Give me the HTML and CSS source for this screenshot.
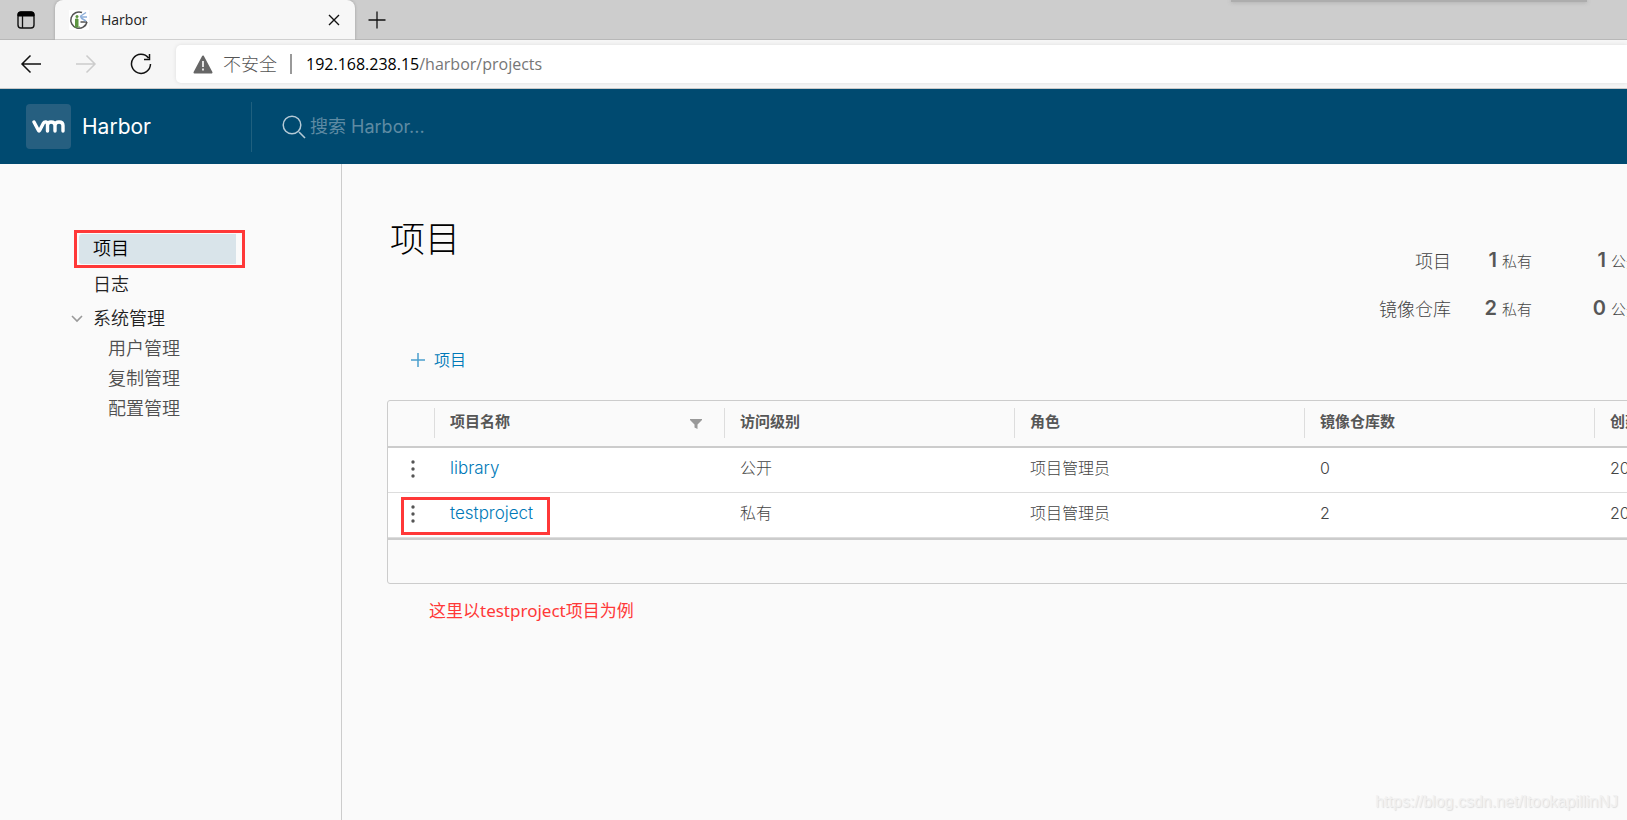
FILE: index.html
```html
<!DOCTYPE html>
<html lang="zh-CN">
<head>
<meta charset="utf-8">
<title>Harbor</title>
<link rel="stylesheet" href="styles.css">
</head>
<body>
<div class="tabstrip">
  <button class="icon-btn strip-menu" aria-label="标签页操作">
    <svg width="18" height="18" viewBox="0 0 18 18"><rect x="1" y="1" width="16" height="16" rx="3" fill="none" stroke="#111" stroke-width="1.4"/><path d="M1 5V3.500Q1 1 3.500 1h11Q17 1 17 3.500V5z" fill="#000" stroke="#000"/><path d="M5.500 5v12" stroke="#111" stroke-width="1.300"/></svg>
  </button>
  <div class="tab">
    <svg width="20" height="20" viewBox="0 0 20 20"><rect width="20" height="20" fill="#fff"/><path d="M13 2.500A8.200 8.200 0 1 0 18 12" fill="none" stroke="#555" stroke-width="1.500"/><path d="M11.500 12H18" stroke="#555" stroke-width="1.300"/><path d="M6.500 16.500V9h2.500v7.500zM5 17h6" fill="#5d9540" stroke="#5d9540"/><circle cx="8" cy="6.500" r="1.500" fill="#5d9540"/><path d="M11 6.500l6-4M11 7h7M12 8l5 3" stroke="#8fb0da" stroke-width="1.500"/></svg>
    <span class="tab-title">Harbor</span>
    <button class="icon-btn" aria-label="关闭标签页"><svg width="12" height="12" viewBox="0 0 12 12"><path d="M1 1l10 10M11 1L1 11" stroke="#111" stroke-width="1.400"/></svg></button>
  </div>
  <button class="icon-btn new-tab" aria-label="新建标签页"><svg width="18" height="18" viewBox="0 0 18 18"><path d="M9 .5v17M.5 9h17" stroke="#111" stroke-width="1.300"/></svg></button>
  <div class="window-edge"></div>
</div>
<div class="toolbar">
  <div class="nav-buttons">
    <button class="icon-btn" aria-label="后退"><svg width="22" height="20" viewBox="0 0 22 20"><path d="M21 10H2M10.500 1.500L2 10l8.500 8.500" fill="none" stroke="#111" stroke-width="1.500"/></svg></button>
    <button class="icon-btn" aria-label="前进"><svg width="22" height="20" viewBox="0 0 22 20"><path d="M1 10h19M11.500 1.500L20 10l-8.500 8.500" fill="none" stroke="#ccc" stroke-width="1.500"/></svg></button>
    <button class="icon-btn" aria-label="刷新"><svg width="22" height="22" viewBox="0 0 22 22"><path d="M18.500 5A9.500 9.500 0 1 0 20.500 11M19.500 1v5.500H14" fill="none" stroke="#111" stroke-width="1.500"/></svg></button>
  </div>
  <div class="address">
    <svg width="20" height="19" viewBox="0 0 20 19"><path d="M10 1.500L18.500 17.500H1.500z" fill="#666" stroke="#666" stroke-width="2" stroke-linejoin="round"/><path d="M10 6v6M10 13.500v2" stroke="#fff" stroke-width="1.600"/></svg>
    <span class="insecure">不安全</span>
    <span class="url">192.168.238.15<span class="url-path">/harbor/projects</span></span>
  </div>
</div>
<header class="app-header">
  <a class="brand" href="#">
    <span class="logo"><svg width="33" height="13" viewBox="0 0 33 13"><path d="M2 2l4.500 8.500Q7 11.500 7.600 10.500L11.500 3Q12.200 1.800 14 2Q15.500 2.200 15.500 4.500V11M15.500 5Q16 2 19 2Q23 2 23 5.500V11M23 5.500Q23 2 27 2Q31 2 31 5.500V11" fill="none" stroke="#fff" stroke-width="3.400" stroke-linecap="round" stroke-linejoin="round"/></svg></span>
    <span class="brand-name">Harbor</span>
  </a>
  <form class="search">
    <svg width="24" height="24" viewBox="0 0 24 24"><circle cx="10" cy="10" r="8.800" fill="none" stroke="#b5cad6" stroke-width="1.500"/><path d="M17 17l6 6" stroke="#b5cad6" stroke-width="1.600"/></svg>
    <input class="search-input" type="text" placeholder="搜索 Harbor..." aria-label="搜索 Harbor">
  </form>
</header>
<div class="body">
  <nav class="sidebar">
    <div class="mark"><a class="nav-link active" href="#">项目</a></div>
    <a class="nav-link" href="#">日志</a>
    <div class="nav-group">
      <svg class="caret" width="12" height="8" viewBox="0 0 12 8"><path d="M1 1l5 5 5-5" fill="none" stroke="#999" stroke-width="1.600"/></svg>
      <a class="nav-link" href="#">系统管理</a>
    </div>
    <a class="sub-link" href="#">用户管理</a>
    <a class="sub-link" href="#">复制管理</a>
    <a class="sub-link" href="#">配置管理</a>
  </nav>
  <main class="content">
    <div class="page-head">
      <h1 class="title">项目</h1>
      <div class="stats">
        <span class="stat-label">项目</span><b class="num">1</b><span class="unit">私有</span><b class="num">1</b><span class="unit">公开</span>
        <span class="stat-label">镜像仓库</span><b class="num">2</b><span class="unit">私有</span><b class="num">0</b><span class="unit">公开</span>
      </div>
    </div>
    <button class="add-btn"><svg width="16" height="16" viewBox="0 0 16 16"><path d="M8 1v14M1 8h14" stroke="#4a9fcd" stroke-width="1.500"/></svg>项目</button>
    <div class="grid">
      <table class="table">
        <colgroup><col class="col-menu"><col><col><col><col><col></colgroup>
        <thead>
          <tr>
            <td></td>
            <th><div class="th">项目名称<button class="icon-btn filter" aria-label="筛选"><svg width="12" height="10" viewBox="0 0 12 10"><path d="M0 0h12v1L7.500 5.500V10L4.500 8.500v-3L0 1z" fill="#999"/></svg></button></div></th>
            <th><div class="th">访问级别</div></th>
            <th><div class="th">角色</div></th>
            <th><div class="th">镜像仓库数</div></th>
            <th><div class="th">创建</div></th>
          </tr>
        </thead>
        <tbody>
          <tr>
            <td class="menu-cell"><button class="icon-btn" aria-label="操作"><svg width="4" height="18" viewBox="0 0 4 18"><circle cx="2" cy="2" r="1.700" fill="#555"/><circle cx="2" cy="9" r="1.700" fill="#555"/><circle cx="2" cy="16" r="1.700" fill="#555"/></svg></button></td>
            <td><a class="link" href="#">library</a></td><td>公开</td><td>项目管理员</td><td>0</td><td>20</td>
          </tr>
          <tr>
            <td class="menu-cell"><button class="icon-btn" aria-label="操作"><svg width="4" height="18" viewBox="0 0 4 18"><circle cx="2" cy="2" r="1.700" fill="#555"/><circle cx="2" cy="9" r="1.700" fill="#555"/><circle cx="2" cy="16" r="1.700" fill="#555"/></svg></button><span class="row-mark"></span></td>
            <td><a class="link" href="#">testproject</a></td><td>私有</td><td>项目管理员</td><td>2</td><td>20</td>
          </tr>
        </tbody>
      </table>
      <div class="grid-foot"></div>
    </div>
    <p class="note">这里以testproject项目为例</p>
  </main>
</div>
<div class="watermark">https://blog.csdn.net/ItookapillinNJ</div>
</body>
</html>
```
FILE: styles.css
```css
* { box-sizing: border-box; }
body {
  margin: 0;
  min-height: 100vh;
  display: flex;
  flex-direction: column;
  overflow: hidden;
  background: #fafafa;
  color: #565656;
  font-family: Inter, "Noto Sans CJK SC", sans-serif;
  font-size: 18px;
}
a { color: inherit; text-decoration: none; }
svg { display: block; flex: none; }
.icon-btn { padding: 0; border: 0; background: none; }

/* browser window */
.tabstrip {
  position: relative;
  display: flex;
  align-items: center;
  height: 40px;
  background: #cdcdcd;
  border-bottom: 1px solid #b8b8b8;
  font-family: "Open Sans", "Noto Sans CJK SC", sans-serif;
}
.strip-menu { margin: 0 20px 0 17px; }
.tab {
  display: flex;
  align-items: center;
  gap: 12px;
  width: 300px;
  height: 40px;
  padding: 0 15px 0 14px;
  background: #f7f7f7;
  border-radius: 8px 8px 0 0;
  box-shadow: 0 0 3px rgba(0, 0, 0, .25);
  clip-path: inset(0 -4px 0 -4px);
  color: #222;
  font-size: 14px;
}
.tab-title { flex: 1; }
.new-tab { margin-left: 13px; }
.window-edge {
  position: absolute;
  top: 0;
  right: 40px;
  width: 356px;
  height: 2px;
  background: #adadad;
  box-shadow: 0 0 4px #999;
}
.toolbar {
  display: flex;
  align-items: center;
  height: 49px;
  background: #f6f6f6;
  border-bottom: 1px solid #c8c8c8;
}
.nav-buttons { display: flex; align-items: center; gap: 33px; width: 176px; padding-left: 20px; }
.address {
  flex: 1;
  display: flex;
  align-items: center;
  height: 38px;
  padding-left: 17px;
  background: #fff;
  border-radius: 5px 0 0 5px;
  box-shadow: 0 0 4px rgba(0, 0, 0, .1);
  font-family: "Open Sans", "Noto Sans CJK SC", sans-serif;
}
.insecure { margin-left: 10px; padding-right: 13px; line-height: 20px; border-right: 2px solid #999; color: #555; font-weight: 300; }
.url { margin-left: 14px; color: #000; font-size: 16px; }
.url-path { color: #767676; }

/* application header */
.app-header { display: flex; align-items: center; height: 75px; background: #004a70; }
.brand {
  display: flex;
  align-items: center;
  gap: 11px;
  width: 252px;
  height: 50px;
  padding-left: 26px;
  border-right: 1px solid #1f607f;
  color: #fff;
  font-size: 21px;
}
.logo { display: flex; align-items: center; justify-content: center; width: 45px; height: 45px; border-radius: 4px; background: #265f80; }
.search { flex: 1; display: flex; align-items: center; gap: 4px; padding-left: 30px; }
.search-input { flex: 1; padding: 0; border: 0; outline: 0; background: none; color: #fff; font: inherit; }
.search-input::placeholder { color: #5f8ba3; opacity: 1; }

/* sidebar */
.body { flex: 1; display: flex; }
.sidebar {
  flex: none;
  display: flex;
  flex-direction: column;
  width: 342px;
  padding: 66px 96px 0 74px;
  border-right: 1px solid #ccc;
  color: #222;
  font-weight: 350;
}
.mark { height: 38px; padding: 1px 6px 0 2px; border: 3px solid #ff3838; }
.nav-link { display: block; height: 34px; padding-left: 19px; line-height: 33px; }
.active { height: 30px; padding-left: 14px; line-height: 30px; border-radius: 3px 0 0 3px; background: #d9e4ea; color: #000; }
.nav-group { position: relative; }
.caret { position: absolute; left: -3px; top: 13px; }
.sub-link { height: 30px; padding-left: 34px; line-height: 26px; color: #505050; }

/* content */
.content { flex: 1; min-width: 0; overflow: hidden; padding: 55px 0 0 45px; }
.page-head { display: flex; justify-content: space-between; align-items: flex-start; height: 129px; }
.title { margin: 0 0 0 3px; color: #000; font-size: 35px; font-weight: 300; line-height: 40px; }
.stats {
  display: grid;
  grid-template-columns: 72px 46px 63px 46px 36px;
  grid-auto-rows: 48px;
  align-items: center;
  justify-items: end;
  margin: 17px -15px 0 0;
}
.stat-label { color: #444; font-weight: 300; }
.num { font-size: 20px; font-weight: 600; }
.unit { justify-self: start; padding-left: 5px; color: #444; font-size: 15px; font-weight: 300; white-space: nowrap; }
.add-btn {
  display: flex;
  align-items: center;
  gap: 8px;
  margin: 0 0 28px 23px;
  padding: 0;
  border: 0;
  background: none;
  color: #0079b8;
  font-family: inherit;
  font-size: 16px;
  font-weight: 350;
  line-height: 24px;
}
.grid { width: max-content; border: 1px solid #ccc; border-radius: 3px; overflow: hidden; }
.table { width: 1496px; table-layout: fixed; border-collapse: separate; border-spacing: 0; }
.col-menu { width: 46px; }
.table thead td, .table th { height: 47px; padding: 7px 0 8px; border-bottom: 2px solid #ccc; vertical-align: top; }
.th {
  display: flex;
  align-items: center;
  justify-content: space-between;
  height: 30px;
  padding: 0 22px 5px 15px;
  border-left: 1px solid #ddd;
  font-size: 15px;
}
.filter { padding-top: 6px; }
.table tbody td { height: 45px; padding: 0 0 4px 16px; border-bottom: 1px solid #ddd; background: #fff; color: #444; font-size: 16px; font-weight: 300; line-height: 24px; }
.table tbody .menu-cell { position: relative; padding: 0 0 2px 23px; }
.menu-cell .icon-btn { display: block; }
.row-mark { position: absolute; left: 13px; top: 4px; z-index: 1; width: 149px; height: 38px; border: 3px solid #ff3838; pointer-events: none; }
.link { color: #0079b8; font-size: 17px; }
.grid-foot { height: 45px; border-top: 2px solid #ccc; }
.note { margin: 14px 0 0 42px; color: #ff3838; font-family: "Noto Sans", "Noto Sans CJK SC", sans-serif; font-size: 17px; line-height: 26px; }
.watermark {
  position: absolute;
  right: 9px;
  bottom: 9px;
  color: #f1f1f1;
  font-family: "Liberation Sans", sans-serif;
  font-size: 16px;
  text-shadow: 1px 1px 1px #ddd;
}
```
